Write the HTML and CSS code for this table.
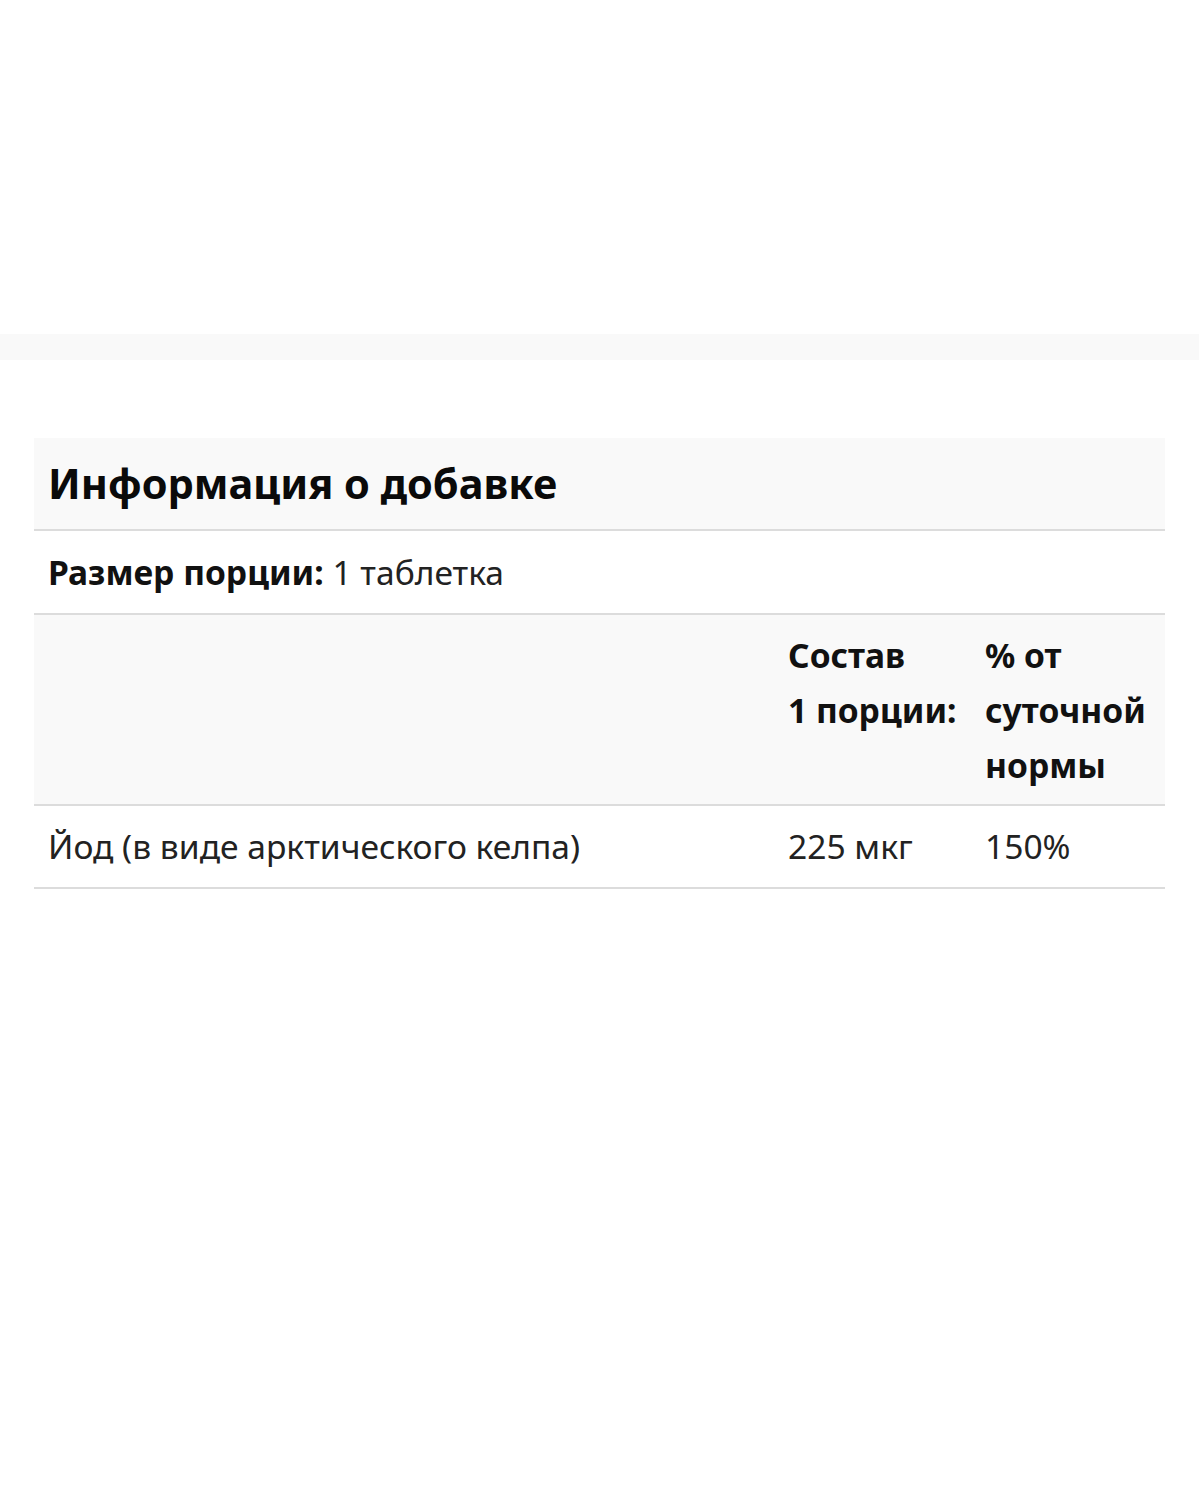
FILE: index.html
```html
<!DOCTYPE html>
<html lang="ru">
<head>
<meta charset="utf-8">
<link rel="stylesheet" href="styles.css">
</head>
<body>
<div class="top"></div>
<div class="band"></div>
<div class="wrap">
  <table class="facts">
    <thead>
      <tr class="title-row"><th colspan="3">Информация о добавке</th></tr>
    </thead>
    <tbody>
      <tr class="serving"><td colspan="3"><b>Размер порции:</b> 1 таблетка</td></tr>
      <tr class="head-row">
        <th class="c1"></th>
        <th class="c2">Состав<br>1 порции:</th>
        <th class="c3">% от суточной нормы</th>
      </tr>
      <tr class="item">
        <td class="c1">Йод (в виде арктического келпа)</td>
        <td class="c2">225 мкг</td>
        <td class="c3">150%</td>
      </tr>
    </tbody>
  </table>
</div>
</body>
</html>
```

FILE: styles.css
```css
html, body {
  margin: 0;
  padding: 0;
  background: #fff;
}
body {
  font-family: "Noto Sans", "Open Sans", sans-serif;
  color: #111;
}
.top {
  height: 334px;
}
.band {
  height: 26px;
  background: #f9f9f9;
}
.wrap {
  padding: 78px 34px 0 34px;
}
.facts {
  width: 100%;
  border-collapse: collapse;
  font-size: 33.6px;
  line-height: 55px;
}
.facts th, .facts td {
  text-align: left;
  vertical-align: top;
  padding: 0 14px;
}
.title-row th {
  background: #f9f9f9;
  font-size: 41.5px;
  font-weight: bold;
  height: 91px;
  vertical-align: middle;
  border-bottom: 2px solid #dcdcdc;
  color: #0a0a0a;
}
.serving td {
  height: 82px;
  vertical-align: middle;
  border-bottom: 2px solid #dcdcdc;
  color: #222;
}
.serving b {
  color: #111;
}
.head-row th {
  background: #f9f9f9;
  padding-top: 13px;
  padding-bottom: 11px;
  border-bottom: 2px solid #dcdcdc;
  font-weight: bold;
}
.item td {
  height: 81px;
  vertical-align: middle;
  border-bottom: 2px solid #dcdcdc;
  color: #222;
}
.c2 { width: 169px; }
.c3 { width: 166px; }
```
